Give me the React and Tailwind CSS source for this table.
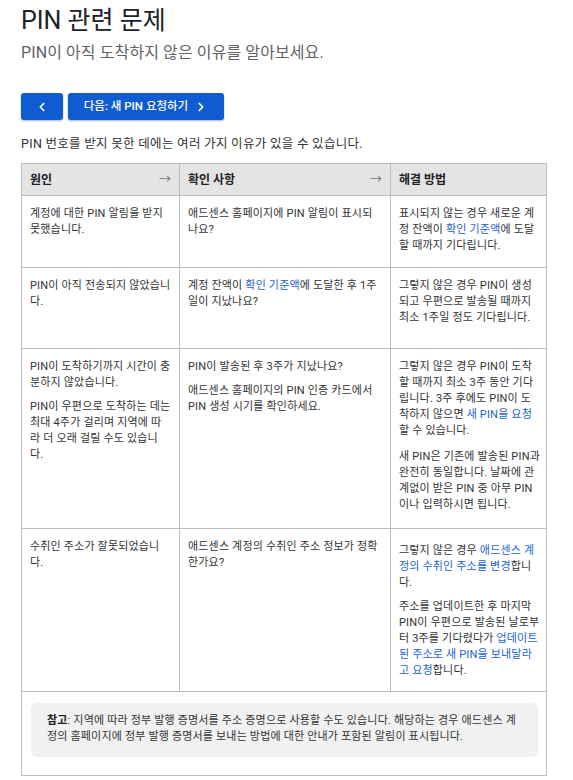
import React from 'react';
import { ChevronLeft, ChevronRight } from 'lucide-react';

const A = ({ children }) => <span className="text-[#1a62d6]">{children}</span>;

const rows = [
  {
    h: 'h-[72px]',
    cause: [<>계정에 대한 PIN 알림을 받지 못했습니다.</>],
    check: [<>애드센스 홈페이지에 PIN 알림이 표시되나요?</>],
    fix: [<>표시되지 않는 경우 새로운 계정 잔액이 <A>확인 기준액</A>에 도달할 때까지 기다립니다.</>],
  },
  {
    h: 'h-[81px]',
    cause: [<>PIN이 아직 전송되지 않았습니다.</>],
    check: [<>계정 잔액이 <A>확인 기준액</A>에 도달한 후 1주일이 지났나요?</>],
    fix: [<>그렇지 않은 경우 PIN이 생성되고 우편으로 발송될 때까지 최소 1주일 정도 기다립니다.</>],
  },
  {
    h: 'h-[180px]',
    cause: [
      <>PIN이 도착하기까지 시간이 충분하지 않았습니다.</>,
      <>PIN이 우편으로 도착하는 데는 최대 4주가 걸리며 지역에 따라 더 오래 걸릴 수도 있습니다.</>,
    ],
    check: [
      <>PIN이 발송된 후 3주가 지났나요?</>,
      <>애드센스 홈페이지의 PIN 인증 카드에서 PIN 생성 시기를 확인하세요.</>,
    ],
    fix: [
      <>그렇지 않은 경우 PIN이 도착할 때까지 최소 3주 동안 기다립니다. 3주 후에도 PIN이 도착하지 않으면 <A>새 PIN을 요청</A>할 수 있습니다.</>,
      <>새 PIN은 기존에 발송된 PIN과 완전히 동일합니다. 날짜에 관계없이 받은 PIN 중 아무 PIN이나 입력하시면 됩니다.</>,
    ],
    gap: 'gap-[10px]',
  },
  {
    h: 'h-[163px]',
    cause: [<>수취인 주소가 잘못되었습니다.</>],
    check: [<>애드센스 계정의 수취인 주소 정보가 정확한가요?</>],
    fix: [
      <>그렇지 않은 경우 <A>애드센스 계정의 수취인 주소를 변경</A>합니다.</>,
      <>주소를 업데이트한 후 마지막 PIN이 우편으로 발송된 날로부터 3주를 기다렸다가 <A>업데이트된 주소로 새 PIN을 보내달라고 요청</A>합니다.</>,
    ],
    fixPad: 'pt-[14px]',
  },
];

const Cell = ({ items, pad = 'pt-[10px]', px = 'px-2', gap = 'gap-2' }) => (
  <td className={`border border-[#bdbdbd] ${px} ${pad} pb-2 align-top`}>
    <div className={`flex flex-col ${gap}`}>
      {items.map((t, i) => (
        <p key={i}>{t}</p>
      ))}
    </div>
  </td>
);

export default function App() {
  return (
    <div
      className="min-h-screen bg-white px-[21px] pt-[5px] text-[#333]"
      style={{ fontFamily: 'Roboto, "Noto Sans CJK KR", sans-serif' }}
    >
      <h1 className="text-[25px] leading-[32px] text-[#202124]">PIN 관련 문제</h1>
      <p className="mt-[4px] text-[16px] leading-[24px] tracking-[0.1px] text-[#5f6368]">
        PIN이 아직 도착하지 않은 이유를 알아보세요.
      </p>

      <div className="mt-[28px] flex gap-[5px]">
        <button className="flex h-[27px] w-[42px] items-center justify-center rounded-[3px] bg-[#0f5bd2] text-white shadow-[0_1px_2px_rgba(0,0,0,0.3)]">
          <ChevronLeft size={14} strokeWidth={3} />
        </button>
        <button className="flex h-[27px] w-[156px] items-center justify-center gap-[6px] rounded-[3px] bg-[#0f5bd2] text-[11.5px] font-medium text-white shadow-[0_1px_2px_rgba(0,0,0,0.3)]">
          다음: 새 PIN 요청하기
          <ChevronRight size={14} strokeWidth={3} />
        </button>
      </div>

      <p className="mt-[15px] text-[12.5px] leading-[18px] tracking-[0.3px]">
        PIN 번호를 받지 못한 데에는 여러 가지 이유가 있을 수 있습니다.
      </p>

      <table className="mt-[10px] w-[526px] table-fixed border-collapse text-[11px] leading-[16px] tracking-[0.18px]">
        <colgroup>
          <col className="w-[158px]" />
          <col className="w-[211px]" />
          <col />
        </colgroup>
        <thead>
          <tr className="h-[32px] bg-[#e4e4e4] text-[12px] font-bold tracking-normal text-[#202124]">
            <th className="border border-[#bdbdbd] px-2 text-left">
              <div className="flex items-center justify-between">
                <span>원인</span>
                <span className="font-normal text-[#757575]">→</span>
              </div>
            </th>
            <th className="border border-[#bdbdbd] px-2 text-left">
              <div className="flex items-center justify-between">
                <span>확인 사항</span>
                <span className="font-normal text-[#757575]">→</span>
              </div>
            </th>
            <th className="border border-[#bdbdbd] px-2 text-left">해결 방법</th>
          </tr>
        </thead>
        <tbody>
          {rows.map((r, i) => (
            <tr key={i} className={r.h}>
              <Cell items={r.cause} />
              <Cell items={r.check} px="pl-2 pr-[10px]" />
              <Cell items={r.fix} px="pl-2 pr-[5px]" pad={r.fixPad || 'pt-[10px]'} gap={r.gap || 'gap-2'} />
            </tr>
          ))}
          <tr>
            <td colSpan={3} className="border border-[#bdbdbd] pb-[18px] pl-[9px] pr-[8px] pt-[11px]">
              <div className="rounded-[6px] bg-[#f1f1f1] px-4 pb-[12px] pt-[10px]">
                <b className="text-[#202124]">참고</b>: 지역에 따라 정부 발행 증명서를 주소 증명으로 사용할 수도 있습니다. 해당하는 경우 애드센스 계정의 홈페이지에 정부 발행 증명서를 보내는 방법에 대한 안내가 포함된 알림이 표시됩니다.
              </div>
            </td>
          </tr>
        </tbody>
      </table>
    </div>
  );
}
